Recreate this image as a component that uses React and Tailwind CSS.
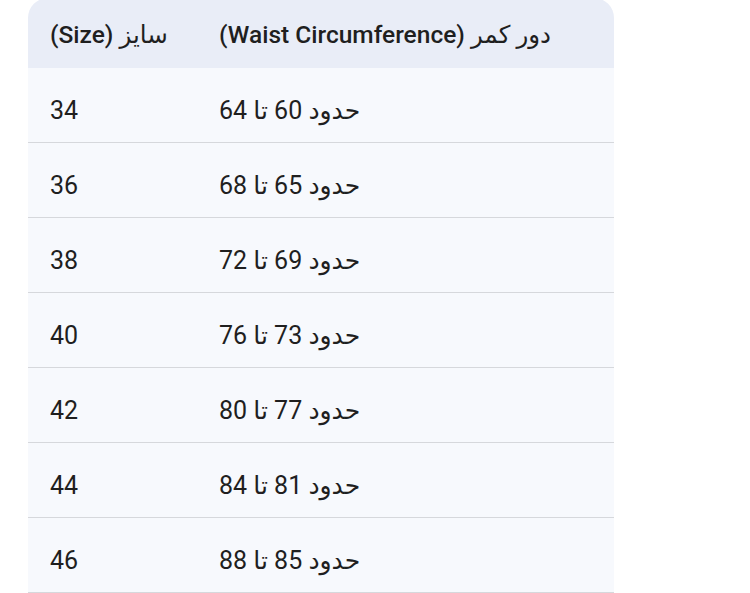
const ROWS = [
  { size: "34", waist: "حدود 60 تا 64" },
  { size: "36", waist: "حدود 65 تا 68" },
  { size: "38", waist: "حدود 69 تا 72" },
  { size: "40", waist: "حدود 73 تا 76" },
  { size: "42", waist: "حدود 77 تا 80" },
  { size: "44", waist: "حدود 81 تا 84" },
  { size: "46", waist: "حدود 85 تا 88" },
];

export default function App() {
  return (
    <div
      className="w-[750px] h-[593px] overflow-hidden bg-white text-[#1f1f1f]"
      style={{ fontFamily: 'Roboto, "DejaVu Sans", "Noto Sans", sans-serif' }}
    >
      <div className="ml-[28px] w-[586px] -mt-[2px]">
        {/* header */}
        <div className="grid grid-cols-[169px_1fr] h-[70px] bg-[#e9edf7] rounded-t-[20px] text-[24.5px] leading-[32px] font-medium">
          <div className="pl-[22px] pt-[21px]">(Size) سایز</div>
          <div className="pl-[22px] pt-[21px]">(Waist Circumference) دور کمر</div>
        </div>

        {ROWS.map((row) => (
          <div
            key={row.size}
            className="grid grid-cols-[169px_1fr] h-[75px] bg-[#f7f9fd] border-b border-[#d6d8dc] text-[25px] leading-[32px]"
          >
            <div className="pl-[22px] pt-[27px]">{row.size}</div>
            <div className="pl-[22px] pt-[27px]">{row.waist}</div>
          </div>
        ))}
      </div>
    </div>
  );
}
